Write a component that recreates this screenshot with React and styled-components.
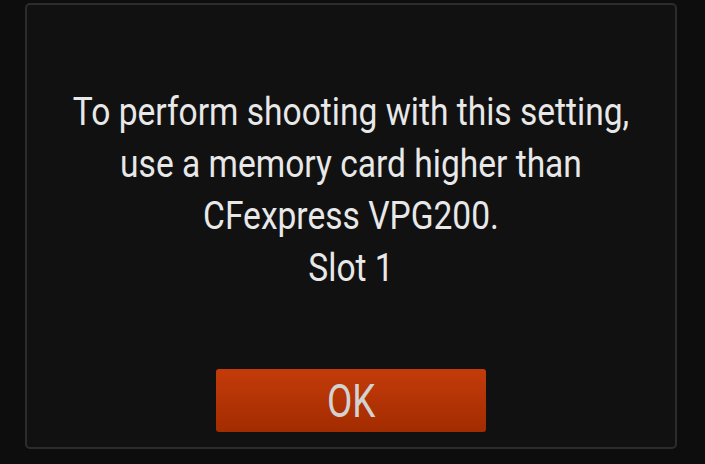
import React from "react";
import styled, { createGlobalStyle } from "styled-components";

const Global = createGlobalStyle`
    html, body {
        margin: 0;
        padding: 0;
        background: #0d0d0d;
    }
    body {
        font-family: Roboto, "Liberation Sans", sans-serif;
    }
`

const Screen = styled.div`
    width: 705px;
    height: 464px;
    box-sizing: border-box;
    padding: 3px 0 0 25px;
    overflow: hidden;
`

const Dialog = styled.div`
    width: 652px;
    height: 446px;
    box-sizing: border-box;
    border: 2px solid #2c2c2c;
    border-radius: 5px;
    background: #111111;
    display: flex;
    flex-direction: column;
    align-items: center;
`

const Message = styled.p`
    margin: 81px 0 0;
    width: 100%;
    text-align: center;
    color: #e8e8e8;
    font-size: 39px;
    line-height: 52px;
    transform: scaleX(0.86);
`

const Button = styled.button`
    margin-top: auto;
    margin-bottom: 15px;
    width: 270px;
    height: 63px;
    border: none;
    border-radius: 3px;
    background: linear-gradient(#c43b0a, #a22c00);
    color: #d2d2d2;
    font-family: Roboto, "Liberation Sans", sans-serif;
    font-size: 46px;
    padding: 0;
    span {
        display: inline-block;
        transform: scaleX(0.8);
    }
`

const lines = [
    "To perform shooting with this setting,",
    "use a memory card higher than",
    "CFexpress VPG200.",
    "Slot 1",
]

const App = () => {
    return (
        <Screen>
            <Global />
            <Dialog>
                <Message>
                    {lines.map((line, i) => (
                        <React.Fragment key={i}>
                            {line}
                            {i < lines.length - 1 && <br />}
                        </React.Fragment>
                    ))}
                </Message>
                <Button><span>OK</span></Button>
            </Dialog>
        </Screen>
    )
}

export default App
